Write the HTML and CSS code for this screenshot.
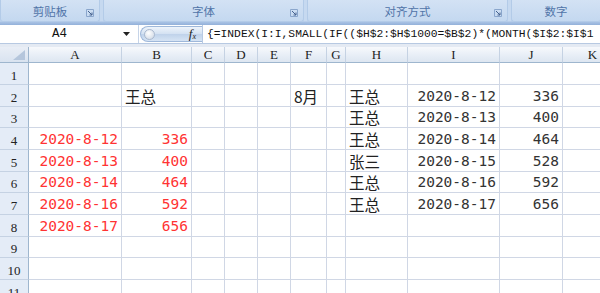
FILE: index.html
```html
<!DOCTYPE html>
<html>
<head>
<meta charset="utf-8">
<link rel="stylesheet" href="styles.css">
</head>
<body>
<div class="ribbon">
  <div class="grp g1"><span class="lbl">剪贴板</span><svg class="launch" width="8" height="8" viewBox="0 0 8 8"><path d="M0.5 0.5H7.5V7.5H0.5Z" fill="none" stroke="#8aa6cc"/><path d="M2 2L6 6M6 3.5V6H3.5" fill="none" stroke="#44618e" stroke-width="1"/></svg></div>
  <div class="grp g2"><span class="lbl">字体</span><svg class="launch" width="8" height="8" viewBox="0 0 8 8"><path d="M0.5 0.5H7.5V7.5H0.5Z" fill="none" stroke="#8aa6cc"/><path d="M2 2L6 6M6 3.5V6H3.5" fill="none" stroke="#44618e" stroke-width="1"/></svg></div>
  <div class="grp g3"><span class="lbl">对齐方式</span><svg class="launch" width="8" height="8" viewBox="0 0 8 8"><path d="M0.5 0.5H7.5V7.5H0.5Z" fill="none" stroke="#8aa6cc"/><path d="M2 2L6 6M6 3.5V6H3.5" fill="none" stroke="#44618e" stroke-width="1"/></svg></div>
  <div class="grp g4"><span class="lbl">数字</span></div>
</div>
<div class="fbar">
  <div class="namebox"><span class="ref">A4</span><svg class="drop" width="7" height="4" viewBox="0 0 7 4"><path d="M0 0H7L3.5 4Z" fill="#222"/></svg></div>
  <div class="pill"><span class="knob"></span><span class="fx">f<sub>x</sub></span></div>
  <div class="formula">{=INDEX(I:I,SMALL(IF(($H$2:$H$1000=$B$2)*(MONTH($I$2:$I$1</div>
</div>
<div class="sep"></div>
<div class="sheet">
  <div class="corner"><svg width="12" height="10" viewBox="0 0 12 10"><path d="M12 0V10H0Z" fill="#b5c6dc"/></svg></div>
  <div class="ch">A</div><div class="ch">B</div><div class="ch">C</div><div class="ch">D</div><div class="ch">E</div><div class="ch">F</div><div class="ch">G</div><div class="ch">H</div><div class="ch">I</div><div class="ch">J</div><div class="ch">K</div>

  <div class="rh">1</div><div class="c"></div><div class="c"></div><div class="c"></div><div class="c"></div><div class="c"></div><div class="c"></div><div class="c"></div><div class="c"></div><div class="c"></div><div class="c"></div><div class="c"></div>

  <div class="rh">2</div><div class="c"></div><div class="c cn">王总</div><div class="c"></div><div class="c"></div><div class="c"></div><div class="c cn">8月</div><div class="c"></div><div class="c cn">王总</div><div class="c r">2020-8-12</div><div class="c r">336</div><div class="c"></div>

  <div class="rh">3</div><div class="c"></div><div class="c"></div><div class="c"></div><div class="c"></div><div class="c"></div><div class="c"></div><div class="c"></div><div class="c cn">王总</div><div class="c r">2020-8-13</div><div class="c r">400</div><div class="c"></div>

  <div class="rh">4</div><div class="c r red">2020-8-12</div><div class="c r red">336</div><div class="c"></div><div class="c"></div><div class="c"></div><div class="c"></div><div class="c"></div><div class="c cn">王总</div><div class="c r">2020-8-14</div><div class="c r">464</div><div class="c"></div>

  <div class="rh">5</div><div class="c r red">2020-8-13</div><div class="c r red">400</div><div class="c"></div><div class="c"></div><div class="c"></div><div class="c"></div><div class="c"></div><div class="c cn">张三</div><div class="c r">2020-8-15</div><div class="c r">528</div><div class="c"></div>

  <div class="rh">6</div><div class="c r red">2020-8-14</div><div class="c r red">464</div><div class="c"></div><div class="c"></div><div class="c"></div><div class="c"></div><div class="c"></div><div class="c cn">王总</div><div class="c r">2020-8-16</div><div class="c r">592</div><div class="c"></div>

  <div class="rh">7</div><div class="c r red">2020-8-16</div><div class="c r red">592</div><div class="c"></div><div class="c"></div><div class="c"></div><div class="c"></div><div class="c"></div><div class="c cn">王总</div><div class="c r">2020-8-17</div><div class="c r">656</div><div class="c"></div>

  <div class="rh">8</div><div class="c r red">2020-8-17</div><div class="c r red">656</div><div class="c"></div><div class="c"></div><div class="c"></div><div class="c"></div><div class="c"></div><div class="c"></div><div class="c"></div><div class="c"></div><div class="c"></div>

  <div class="rh">9</div><div class="c"></div><div class="c"></div><div class="c"></div><div class="c"></div><div class="c"></div><div class="c"></div><div class="c"></div><div class="c"></div><div class="c"></div><div class="c"></div><div class="c"></div>

  <div class="rh">10</div><div class="c"></div><div class="c"></div><div class="c"></div><div class="c"></div><div class="c"></div><div class="c"></div><div class="c"></div><div class="c"></div><div class="c"></div><div class="c"></div><div class="c"></div>

  <div class="rh">11</div><div class="c"></div><div class="c"></div><div class="c"></div><div class="c"></div><div class="c"></div><div class="c"></div><div class="c"></div><div class="c"></div><div class="c"></div><div class="c"></div><div class="c"></div>
</div>
</body>
</html>
```
FILE: styles.css
```css
html, body {
  margin: 0;
  padding: 0;
  width: 600px;
  height: 293px;
  overflow: hidden;
  background: #ffffff;
}

.ribbon {
  height: 25px;
  box-sizing: border-box;
  display: flex;
  gap: 3px;
  background: linear-gradient(#c6d9f0 0, #c6d9f0 21px, #a9c2e4 22px, #93b1da 25px);
  padding-bottom: 3px;
}

.grp {
  position: relative;
  height: 22px;
  box-sizing: border-box;
  background: linear-gradient(#d3e2f4, #c4d8f0);
  border: 1px solid #b3cbe8;
  border-top: none;
  border-radius: 0 0 3px 3px;
  display: flex;
  align-items: center;
  justify-content: center;
}

.g1 { width: 100px; }
.g2 { width: 201px; }
.g3 { width: 201px; }
.g4 { flex: 1; border-right: none; }

.lbl {
  font-family: "Noto Sans CJK SC", sans-serif;
  font-size: 11.5px;
  color: #5074a8;
  line-height: 1;
  margin-top: 3px;
}

.launch {
  position: absolute;
  right: 5px;
  top: 9px;
}

.fbar {
  height: 19px;
  display: flex;
  align-items: stretch;
  background: #ffffff;
  border-bottom: 1px solid #b7c9e2;
  box-sizing: border-box;
}

.namebox {
  width: 138px;
  display: flex;
  align-items: center;
  position: relative;
  border-right: 1px solid #c6d4e8;
}

.ref {
  flex: 1;
  text-align: center;
  font-family: "Liberation Mono", monospace;
  font-size: 12.5px;
  color: #111;
  padding-right: 4px;
}

.drop {
  margin-right: 8px;
}

.pill {
  width: 62px;
  margin: 1px 0 1px 1px;
  border-radius: 9px 0 0 9px;
  background: linear-gradient(#eef4fb 0%, #d3e1f2 50%, #bfd2ea 51%, #d6e4f4 100%);
  border: 1px solid #9fb8da;
  border-right: none;
  display: flex;
  align-items: center;
  justify-content: space-between;
  box-sizing: border-box;
  padding: 0 6px 0 3px;
}

.knob {
  width: 9px;
  height: 9px;
  border-radius: 50%;
  background: radial-gradient(circle at 40% 35%, #ffffff, #c9d4e2);
  border: 1px solid #aab9cf;
}

.fx {
  font-family: "Liberation Serif", serif;
  font-style: italic;
  font-size: 13px;
  color: #222;
  line-height: 1;
}

.fx sub {
  font-size: 8px;
  vertical-align: -1px;
}

.formula {
  flex: 1;
  border-left: 1px solid #b7c9e2;
  padding-left: 4px;
  font-family: "Liberation Mono", monospace;
  font-size: 11.3px;
  color: #111;
  white-space: nowrap;
  overflow: hidden;
  display: flex;
  align-items: center;
}

.sep {
  height: 3px;
  background: #e4eaf3;
}

.sheet {
  display: grid;
  grid-template-columns: 29px 93px 70px 33px 33px 33px 36px 19px 62px 92px 63px 60px;
  grid-template-rows: 16px 22px 22px 21px 22px 22px 21px 22px 22px 21px 22px 22px;
}

.corner {
  background: linear-gradient(#e9eef6, #d9e3f0);
  border-right: 1px solid #9eb6ce;
  border-bottom: 1px solid #9eb6ce;
  display: flex;
  align-items: flex-end;
  justify-content: flex-end;
  padding: 0 3px 2px 0;
}

.ch {
  background: linear-gradient(#f7f9fc 0%, #e9eff7 50%, #dde6f1 100%);
  border-right: 1px solid #c5d2e3;
  border-bottom: 1px solid #9eb6ce;
  font-family: "Liberation Serif", serif;
  font-size: 13px;
  color: #222;
  display: flex;
  align-items: center;
  justify-content: center;
  line-height: 1;
}

.rh {
  background: #e4ecf7;
  border-right: 1px solid #9eb6ce;
  border-bottom: 1px solid #c5d2e3;
  font-family: "Liberation Serif", serif;
  font-size: 13px;
  color: #222;
  display: flex;
  align-items: flex-end;
  justify-content: center;
  padding-bottom: 2px;
  line-height: 1;
}

.c {
  border-right: 1px solid #d0d7e5;
  border-bottom: 1px solid #d0d7e5;
  display: flex;
  align-items: flex-end;
  padding: 0 3px 1px 3px;
  overflow: hidden;
  white-space: nowrap;
  font-family: "DejaVu Sans Mono", monospace;
  font-size: 14.5px;
  color: #333;
  line-height: 18px;
}

.c.r {
  justify-content: flex-end;
}

.c.cn {
  font-family: "Noto Sans CJK SC", sans-serif;
  font-size: 15.5px;
  line-height: 18px;
  padding-bottom: 1px;
  color: #222;
}

.c.red {
  color: #f33;
}
```
